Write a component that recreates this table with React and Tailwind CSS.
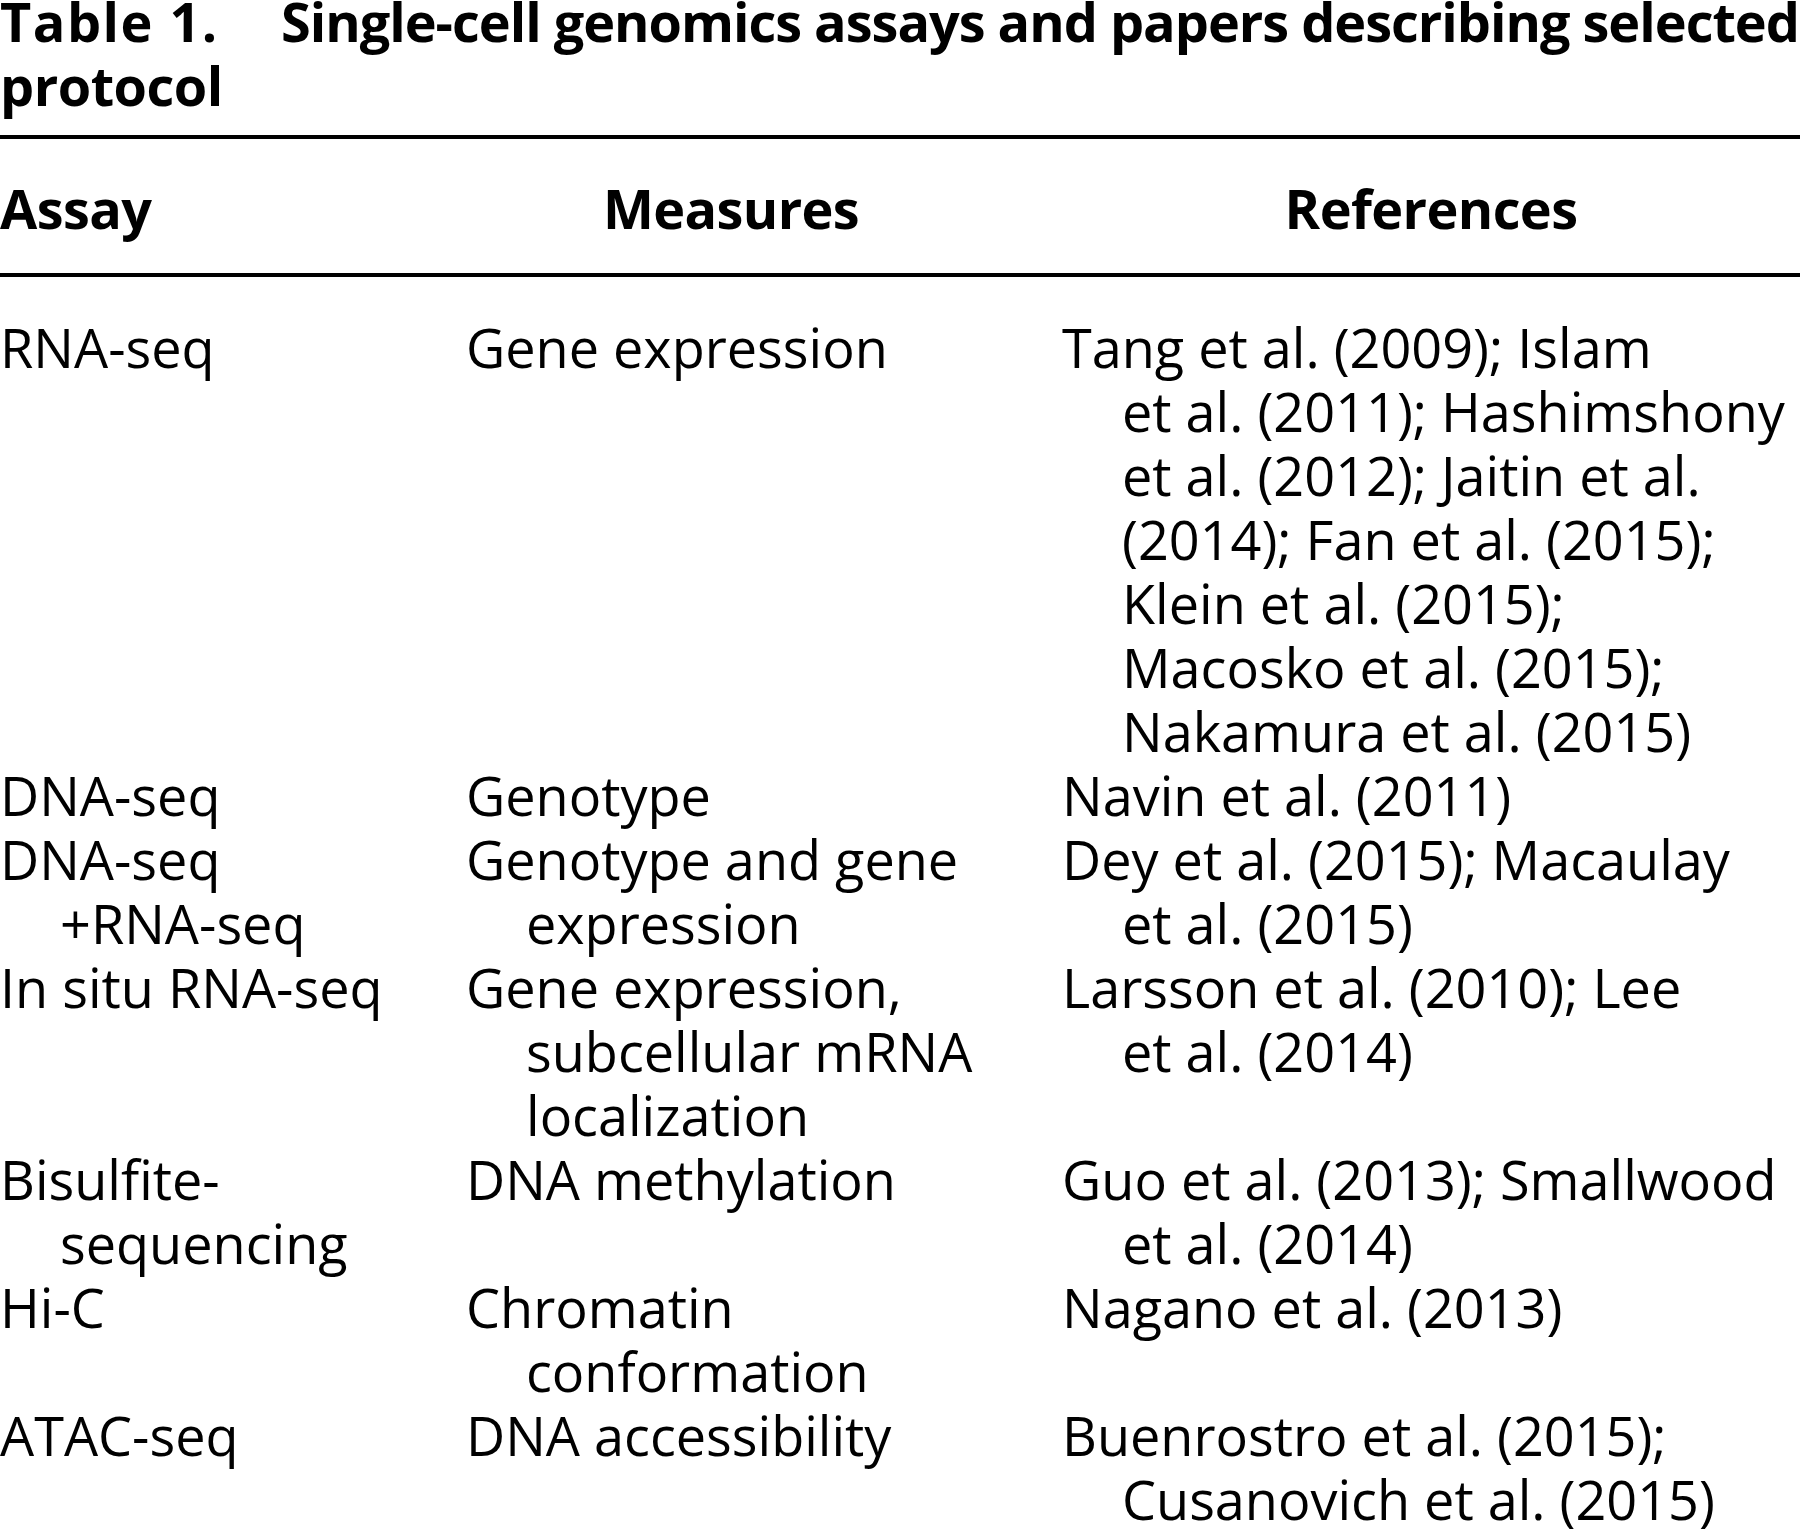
const rows = [
  {
    assay: ['RNA-seq'],
    measures: ['Gene expression'],
    refs: [
      'Tang et al. (2009); Islam',
      'et al. (2011); Hashimshony',
      'et al. (2012); Jaitin et al.',
      '(2014); Fan et al. (2015);',
      'Klein et al. (2015);',
      'Macosko et al. (2015);',
      'Nakamura et al. (2015)',
    ],
  },
  { assay: ['DNA-seq'], measures: ['Genotype'], refs: ['Navin et al. (2011)'] },
  {
    assay: ['DNA-seq', '+RNA-seq'],
    measures: ['Genotype and gene', 'expression'],
    refs: ['Dey et al. (2015); Macaulay', 'et al. (2015)'],
  },
  {
    assay: ['In situ RNA-seq'],
    measures: ['Gene expression,', 'subcellular mRNA', 'localization'],
    refs: ['Larsson et al. (2010); Lee', 'et al. (2014)'],
  },
  {
    assay: ['Bisulfite-', 'sequencing'],
    measures: ['DNA methylation'],
    refs: ['Guo et al. (2013); Smallwood', 'et al. (2014)'],
  },
  { assay: ['Hi-C'], measures: ['Chromatin', 'conformation'], refs: ['Nagano et al. (2013)'] },
  {
    assay: ['ATAC-seq'],
    measures: ['DNA accessibility'],
    refs: ['Buenrostro et al. (2015);', 'Cusanovich et al. (2015)'],
  },
];

// hanging indent: first line flush, the rest pushed in
const Cell = ({ lines }) => (
  <div className="pl-[60px] -indent-[60px] whitespace-nowrap">
    {lines.map((line, i) => (
      <span key={i}>
        {i > 0 && <br />}
        {line}
      </span>
    ))}
  </div>
);

const App = () => {
  return (
    <div className="w-full h-[1533px] overflow-hidden bg-white text-black font-['Open_Sans',sans-serif] text-[54px] leading-[64px]">
      <h1 className="-mt-[11px] font-bold whitespace-nowrap">
        <span className="inline-block w-[281px] tracking-[1.5px]">Table 1.</span>
        <span className="tracking-[-1px]">Single-cell genomics assays and papers describing selected</span>
        <br />
        <span className="tracking-[-0.5px]">protocol</span>
      </h1>

      <div className="mt-[18px] border-t-[4px] border-black" />

      <div className="grid grid-cols-[466px_596px_1fr] font-bold tracking-[-0.6px] pt-[37px] pb-[33px]">
        <div>Assay</div>
        <div className="text-center pr-[66px]">Measures</div>
        <div className="text-center">References</div>
      </div>

      <div className="border-t-[4px] border-black" />

      <div className="pt-[38px]">
        {rows.map((row, i) => (
          <div key={i} className="grid grid-cols-[466px_596px_1fr]">
            <Cell lines={row.assay} />
            <Cell lines={row.measures} />
            <Cell lines={row.refs} />
          </div>
        ))}
      </div>
    </div>
  );
};

export default App;
